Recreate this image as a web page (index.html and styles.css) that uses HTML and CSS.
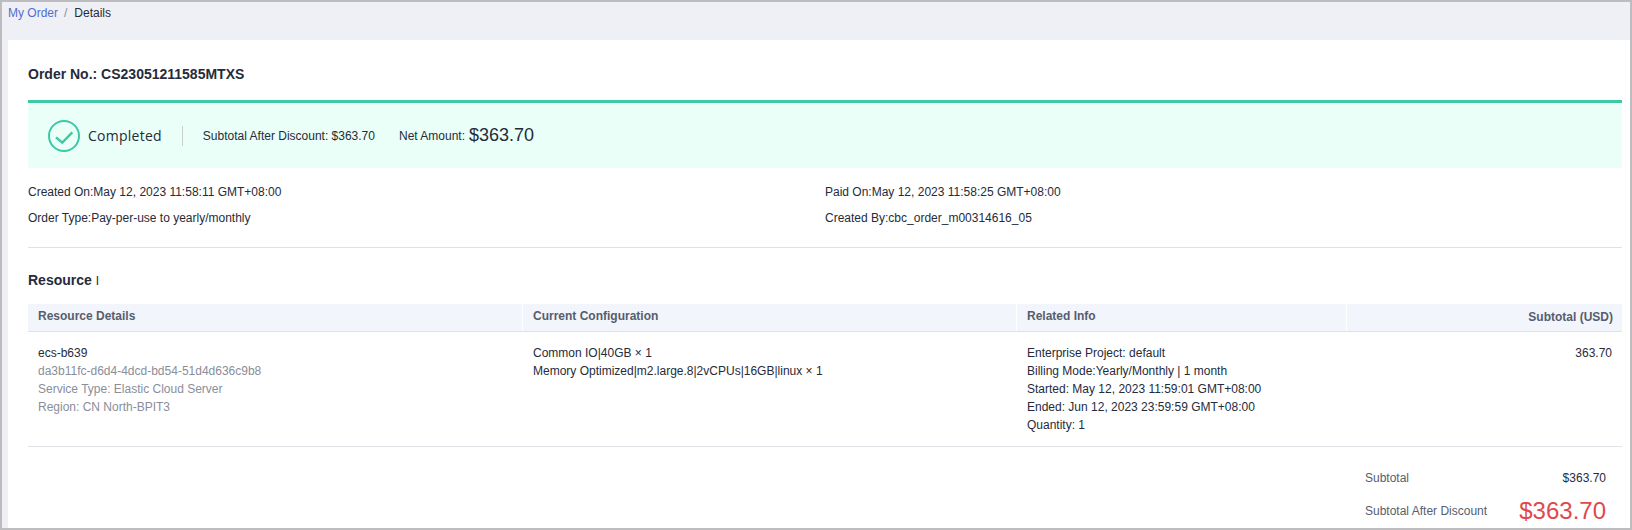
FILE: index.html
```html
<!DOCTYPE html>
<html lang="en">
<head>
<meta charset="utf-8">
<title>Order Details</title>
<link rel="stylesheet" href="styles.css">
</head>
<body>
<div class="frame">
  <nav class="crumbs"><a class="crumb-link">My Order</a><span class="crumb-sep">/</span><span class="crumb-current">Details</span></nav>
  <main class="card">
    <h1 class="order-no">Order No.: CS23051211585MTXS</h1>
    <section class="status">
      <svg class="status-icon" viewBox="0 0 32 32" width="32" height="32" aria-hidden="true"><circle cx="16" cy="16" r="15" fill="none" stroke="#3cc9a4" stroke-width="2"/><path d="M8 17.3l6.3 5.4 10-10.4" fill="none" stroke="#3cc9a4" stroke-width="2.4"/></svg>
      <span class="status-text">Completed</span>
      <span class="status-div"></span>
      <span class="status-sub">Subtotal After Discount: $363.70</span>
      <span class="status-net">Net Amount:</span>
      <span class="status-amount">$363.70</span>
    </section>
    <section class="meta">
      <div>Created On:May 12, 2023 11:58:11 GMT+08:00</div>
      <div>Paid On:May 12, 2023 11:58:25 GMT+08:00</div>
      <div>Order Type:Pay-per-use to yearly/monthly</div>
      <div>Created By:cbc_order_m00314616_05</div>
    </section>
    <h2 class="res-title">Resource <span class="res-bar">I</span></h2>
    <div class="table">
      <div class="row head">
        <div class="cell c1">Resource Details</div>
        <div class="cell c2">Current Configuration</div>
        <div class="cell c3">Related Info</div>
        <div class="cell c4 right">Subtotal (USD)</div>
      </div>
      <div class="row body">
        <div class="cell c1">
          <div>ecs-b639</div>
          <div class="muted">da3b11fc-d6d4-4dcd-bd54-51d4d636c9b8</div>
          <div class="muted">Service Type: Elastic Cloud Server</div>
          <div class="muted">Region: CN North-BPIT3</div>
        </div>
        <div class="cell c2">
          <div>Common IO|40GB × 1</div>
          <div>Memory Optimized|m2.large.8|2vCPUs|16GB|linux × 1</div>
        </div>
        <div class="cell c3">
          <div>Enterprise Project: default</div>
          <div>Billing Mode:Yearly/Monthly | 1 month</div>
          <div>Started: May 12, 2023 11:59:01 GMT+08:00</div>
          <div>Ended: Jun 12, 2023 23:59:59 GMT+08:00</div>
          <div>Quantity: 1</div>
        </div>
        <div class="cell c4 right">363.70</div>
      </div>
    </div>
    <section class="totals">
      <div class="total-row"><span class="total-label">Subtotal</span><span class="total-val">$363.70</span></div>
      <div class="total-row big"><span class="total-label">Subtotal After Discount</span><span class="total-big">$363.70</span></div>
    </section>
  </main>
</div>
</body>
</html>
```
FILE: styles.css
```css
* { box-sizing: border-box; }
html, body { margin: 0; padding: 0; height: 100%; overflow: hidden; }
body { font-family: "Liberation Sans", Arial, sans-serif; font-size: 12px; color: #252b3a; background: #fff; }
.frame { width: 1632px; height: 530px; border: 2px solid #bdbdc0; background: #eff0f5; padding-left: 6px; overflow: hidden; }
.crumbs { height: 38px; padding-top: 4px; line-height: 14px; }
.crumb-link { color: #526ecc; }
.crumb-sep { color: #8a8e99; margin: 0 7px 0 6px; }
.card { background: #fff; height: 490px; padding: 0 8px 0 20px; }
.order-no { margin: 0; padding-top: 26px; height: 60px; font-size: 14px; line-height: 16px; font-weight: 700; }
.status { height: 68px; background: #e9fff8; border-top: 3px solid #3cc9a4; display: flex; align-items: center; padding-left: 20px; }
.status-icon { flex: none; }
.status-text { font-family: "Open Sans", sans-serif; font-size: 14px; letter-spacing: .25px; margin-left: 8px; }
.status-div { width: 1px; height: 20px; background: #c9cdd2; margin: 0 20px; }
.status-net { margin-left: 24px; }
.status-amount { font-size: 18px; margin-left: 4px; }
.meta { display: grid; grid-template-columns: 797px 1fr; grid-auto-rows: 26px; padding-top: 11px; height: 80px; line-height: 26px; border-bottom: 1px solid #dfe1e6; }
.res-title { margin: 0; padding-top: 24px; height: 56px; font-size: 14px; line-height: 16px; font-weight: 700; }
.res-bar { font-weight: 400; font-size: 12px; }
.row { display: flex; }
.cell { padding: 0 10px; }
.c1 { width: 494px; }
.c2 { width: 494px; }
.c3 { width: 330px; }
.c4 { flex: 1; }
.cell.right { text-align: right; padding-right: 9px; }
.head { height: 28px; background: #f2f5fc; border-bottom: 1px solid #dfe1e6; color: #575d6c; font-weight: 700; line-height: 25px; }
.head .cell + .cell { border-left: 1px solid #fff; }
.body .cell + .cell { border-left: 1px solid transparent; }
.head .c4 { line-height: 27px; }
.body { height: 115px; padding-top: 12px; line-height: 18px; border-bottom: 1px solid #dfe1e6; }
.body .c4 { padding-right: 10px; }
.muted { color: #8a8e99; }
.totals { padding-top: 21px; display: flex; flex-direction: column; align-items: flex-end; padding-right: 16px; color: #575d6c; }
.total-row { display: flex; width: 241px; justify-content: space-between; align-items: center; height: 20px; }
.total-val { color: #252b3a; }
.big { margin-top: 10px; height: 26px; }
.total-big { font-size: 24px; color: #e0484d; }
```
